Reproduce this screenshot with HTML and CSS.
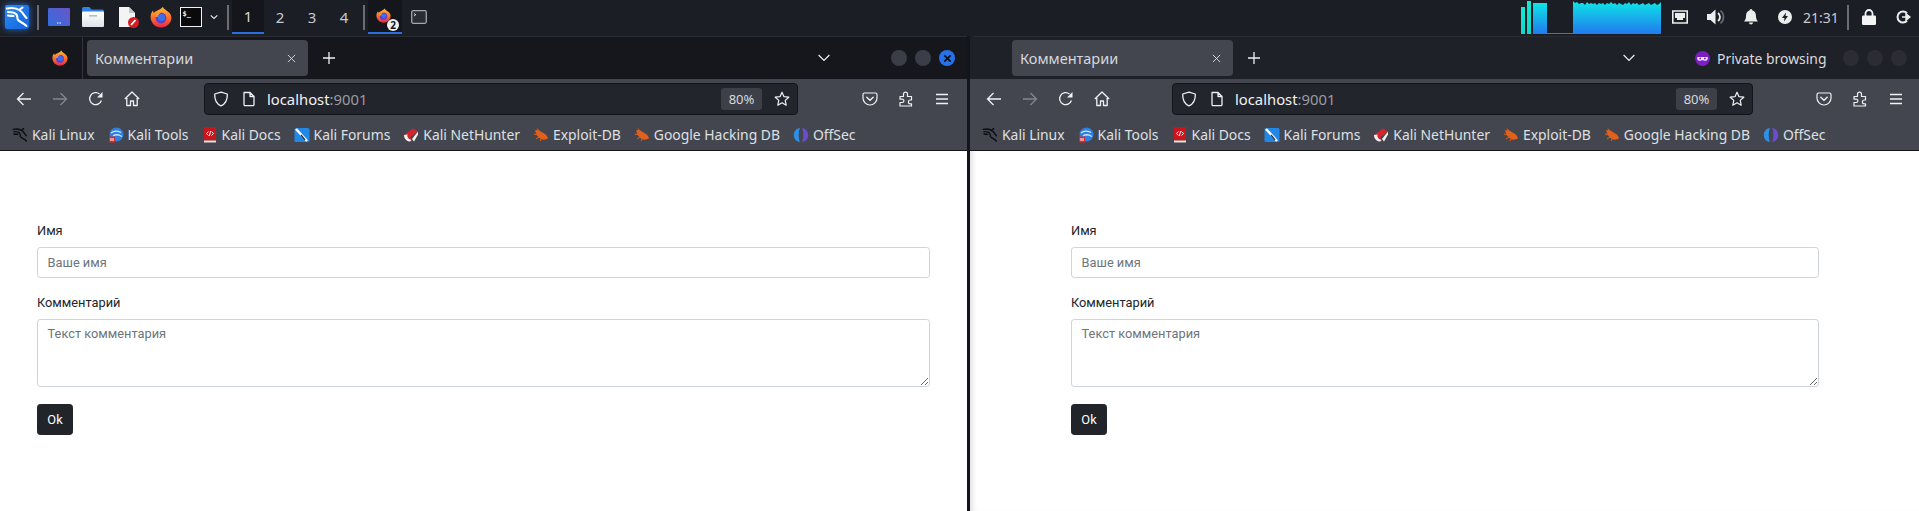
FILE: index.html
```html
<!DOCTYPE html>
<html lang="ru">
<head>
    <meta charset="UTF-8">
    <meta name="viewport" content="width=device-width, initial-scale=1.0">
    <title>Комментарии</title>
    <link rel="stylesheet" href="styles.css">
</head>
<body>

    <!-- Icon sprite -->
    <svg class="sprite" xmlns="http://www.w3.org/2000/svg">
        <defs>
            <linearGradient id="gradBar" x1="0" y1="0" x2="0" y2="1">
                <stop offset="0" stop-color="#0ee6e6"/>
                <stop offset="1" stop-color="#2179ee"/>
            </linearGradient>
            <linearGradient id="gradTeal" x1="0" y1="0" x2="0" y2="1">
                <stop offset="0" stop-color="#14e8d0"/>
                <stop offset="1" stop-color="#10d8c8"/>
            </linearGradient>
            <linearGradient id="gradFlame" x1="0" y1="0" x2="0" y2="1">
                <stop offset="0" stop-color="#ffc02e"/>
                <stop offset="0.55" stop-color="#ff6a2b"/>
                <stop offset="1" stop-color="#e5284a"/>
            </linearGradient>
            <linearGradient id="gradWs" x1="0" y1="1" x2="1" y2="0">
                <stop offset="0" stop-color="#2f6fe0"/>
                <stop offset="1" stop-color="#6a55c8"/>
            </linearGradient>
            <linearGradient id="gradFolder" x1="0" y1="0" x2="0" y2="1">
                <stop offset="0" stop-color="#ffffff"/>
                <stop offset="1" stop-color="#dfe3e8"/>
            </linearGradient>

            <symbol id="i-firefox" viewBox="0 0 22 22">
                <path d="M13 .8c.2 1.800 1.800 2.600 3.400 3.600 3 1.900 4.900 4 5 7.100.2 5.600-4.600 10-10.400 10C5.200 21.500.6 16.800.6 11 .6 8.600 1.500 6.200 3 4.600c0 1 .3 1.800.9 2.300C6 4.500 10.500 4 13 .8z" fill="url(#gradFlame)"/>
                <circle cx="11" cy="12" r="5.400" fill="#5a3fd0"/>
                <circle cx="11.500" cy="11.500" r="3.600" fill="#3f6fe8"/>
                <path d="M5 11c1-3 4-5 7.500-4.600C10 7 8 8.500 7.500 11z" fill="#ff9a2e"/>
            </symbol>

            <symbol id="i-kali" viewBox="0 0 24 24">
                <path d="M2 3.500c5-1 9.500-.5 13 2 3 2 4 5 6.500 7.500M3 7c3.500 0 7 .5 8.500 2.500 1.500 1.900.2 3.600 1.500 5.400 1.500 2 5 2.600 8.500 6.100M14 5l3.500-2.500M3 10.500c2 .5 4 .3 5.500.5" fill="none" stroke="currentColor" stroke-width="2.100" stroke-linecap="round"/>
            </symbol>

            <symbol id="i-arrow" viewBox="0 0 16 16">
                <path d="M15 8H1.500M7.500 2L1.500 8l6 6" fill="none" stroke="currentColor" stroke-width="1.300"/>
            </symbol>
            <symbol id="i-reload" viewBox="0 0 16 16">
                <path d="M13.400 9.500A6 6 0 1 1 11.500 3" fill="none" stroke="currentColor" stroke-width="1.300"/>
                <path d="M14.500 1v5.500H9z" fill="currentColor"/>
            </symbol>
            <symbol id="i-home" viewBox="0 0 16 16">
                <path d="M.8 8L8 1l7.200 7M2.800 7v7.500h3.700v-4.500h3v4.500h3.700V7" fill="none" stroke="currentColor" stroke-width="1.300" stroke-linejoin="round"/>
            </symbol>
            <symbol id="i-shield" viewBox="0 0 16 16">
                <path d="M8 1.200l6.300 1.800c.2 5.500-1.500 9.800-6.300 11.800C3.200 12.800 1.500 8.500 1.700 3z" fill="none" stroke="currentColor" stroke-width="1.300" stroke-linejoin="round"/>
            </symbol>
            <symbol id="i-page" viewBox="0 0 16 16">
                <path d="M3 1.500h6l4 4v8a1.200 1.200 0 0 1-1.200 1.200H4.200A1.200 1.200 0 0 1 3 13.500z M9 1.500v4h4" fill="none" stroke="currentColor" stroke-width="1.300" stroke-linejoin="round"/>
            </symbol>
            <symbol id="i-star" viewBox="0 0 16 16">
                <path d="M8 1.200l2 4.500 4.800.5-3.600 3.200 1 4.800L8 11.800l-4.200 2.400 1-4.800L1.200 6.200 6 5.700z" fill="none" stroke="currentColor" stroke-width="1.200" stroke-linejoin="round"/>
            </symbol>
            <symbol id="i-pocket" viewBox="0 0 16 16">
                <path d="M2.500 2h11A1.500 1.500 0 0 1 15 3.500V7a7 7 0 0 1-14 0V3.500A1.500 1.500 0 0 1 2.500 2z" fill="none" stroke="currentColor" stroke-width="1.200"/>
                <path d="M4.800 6.200L8 9.200l3.200-3" fill="none" stroke="currentColor" stroke-width="1.400" stroke-linecap="round"/>
            </symbol>
            <symbol id="i-ext" viewBox="0 0 16 16">
                <path d="M2 5.500h3.500V3.200a2 2 0 0 1 4 0V5.500H13.500v3.500h-1.200v0a1.900 1.900 0 0 0 0 3.800h1.200V15H2v-3.500h2.200a1.700 1.700 0 0 0 0-3.400H2z" fill="none" stroke="currentColor" stroke-width="1.200" stroke-linejoin="round"/>
            </symbol>
            <symbol id="i-menu" viewBox="0 0 16 16">
                <path d="M2 3.500h12M2 8h12M2 12.500h12" stroke="currentColor" stroke-width="1.300"/>
            </symbol>
            <symbol id="i-close" viewBox="0 0 10 10">
                <path d="M1 1l8 8M9 1l-8 8" stroke="currentColor" stroke-width="1"/>
            </symbol>
            <symbol id="i-plus" viewBox="0 0 12 12">
                <path d="M6 0v12M0 6h12" stroke="currentColor" stroke-width="1.300"/>
            </symbol>
            <symbol id="i-chevron" viewBox="0 0 12 8">
                <path d="M.6 1l5.400 5.500L11.400 1" fill="none" stroke="currentColor" stroke-width="1.200"/>
            </symbol>

            <!-- Bookmark favicons -->
            <symbol id="b-tools" viewBox="0 0 16 16">
                <circle cx="8.500" cy="7.500" r="7" fill="#2f7fe0"/>
                <path d="M3 6c3-2.500 6-2.500 10-.5M5 9c3-2 5-1.500 9 .5" fill="none" stroke="#cfe6ff" stroke-width="1.300"/>
                <rect x="1" y="9.500" width="6" height="6" rx="1" fill="#d8282c"/>
                <path d="M3 11v3M5 11v3" stroke="#fff" stroke-width="1"/>
            </symbol>
            <symbol id="b-docs" viewBox="0 0 16 16">
                <rect x="2" y="0" width="12" height="13.500" fill="#c8161c"/>
                <rect x="2" y="13.500" width="12" height="2" fill="#e8dfd8"/>
                <path d="M6.500 4.500L4.500 6.500l2 2M9.500 4.500l2 2-2 2M8.700 4l-1.400 5" fill="none" stroke="#fff" stroke-width=".9"/>
            </symbol>
            <symbol id="b-forums" viewBox="0 0 16 16">
                <rect x="0.500" y="1" width="15" height="14" rx="1.500" fill="#2188e8"/>
                <path d="M2 2l11 12" stroke="#fff" stroke-width="2.400"/>
                <path d="M7 8l4 5" stroke="#33363d" stroke-width="1.400"/>
            </symbol>
            <symbol id="b-nethunter" viewBox="0 0 16 16">
                <path d="M1 8l9-6.500 5 3-8 6 2 3-2 1.500z" fill="#d4242c"/>
                <path d="M1 8c0 4 3 6.500 6 6.500l1.500-1.500C5 12 4 10 4.500 7.500z" fill="#f0f0f0"/>
                <path d="M15 4.500L9 12l2 2.500 4-7z" fill="#f0f0f0"/>
            </symbol>
            <symbol id="b-bug" viewBox="0 0 16 16">
                <path d="M2 3.500c2-1 4-.5 6 1l4 2.500c1.500 1 2.500 2.500 3 4.500-2.500 1.500-5.500 1.500-7.500.2C5 10.500 3 7 2 3.500z" fill="#e0601c"/>
                <path d="M4 1.500l2.500 3M1 7l3.500 1M3 12l3-2M7 14l1.500-2.500" stroke="#e0601c" stroke-width="1"/>
            </symbol>
            <symbol id="b-offsec" viewBox="0 0 16 16">
                <path d="M6.800 1C3 1.500 .8 4.500.8 8s2.200 6.500 6 7c-1.500-4-1.500-10 0-14z" fill="#2f8fe6"/>
                <path d="M9.200 1c3.800.5 6 3.500 6 7s-2.200 6.500-6 7c1.500-4 1.500-10 0-14z" fill="#6b4bd0"/>
            </symbol>
        </defs>
    </svg>

    <!-- Top panel -->
    <div class="panel">
        <div class="panel-group">
            <span class="kali-button"><svg class="kali-mark"><use href="#i-kali"/></svg></span>
            <span class="panel-sep sep-first"></span>
            <svg class="launcher launcher-ws" viewBox="0 0 22 18">
                <rect width="22" height="18" rx="1" fill="url(#gradWs)"/>
                <path d="M9 15h4" stroke="#fff" stroke-width="1" stroke-dasharray="1 .5"/>
            </svg>
            <svg class="launcher launcher-folder" viewBox="0 0 22 20">
                <path d="M0 1.500A1.500 1.500 0 0 1 1.500 0h6l2 2.500h11A1.500 1.500 0 0 1 22 4v3H0z" fill="#2f80e0"/>
                <rect y="4.500" width="22" height="15.500" rx="1" fill="url(#gradFolder)"/>
                <rect x="7" y="8" width="8" height="1.600" fill="#b8bcc4"/>
            </svg>
            <svg class="launcher launcher-doc" viewBox="0 0 21 21">
                <path d="M1 0h10l6 6v14H1z" fill="#f4f4f4"/>
                <path d="M11 0l6 6h-6z" fill="#c4c6cb"/>
                <circle cx="15.500" cy="15.500" r="5.500" fill="#d01f26"/>
                <path d="M13 18l4.500-5" stroke="#fff" stroke-width="1.800"/>
            </svg>
            <svg class="launcher launcher-fox"><use href="#i-firefox"/></svg>
            <svg class="launcher launcher-term" viewBox="0 0 22 20">
                <rect x=".5" y=".5" width="21" height="19" fill="#0a0a0c" stroke="#f2f2f2"/>
                <text x="2.500" y="9" class="term-text">$_</text>
            </svg>
            <svg class="panel-chevron" viewBox="0 0 12 8"><path d="M1 1.500l5 4.500 5-4.500" fill="none" stroke="#e8e8ea" stroke-width="1.800"/></svg>
            <span class="panel-sep sep-pager"></span>
            <div class="pager">
                <span class="pager-item pager-active">1</span>
                <span class="pager-item">2</span>
                <span class="pager-item">3</span>
                <span class="pager-item">4</span>
            </div>
            <span class="panel-sep sep-tasks"></span>
            <div class="task task-active">
                <svg class="task-fox"><use href="#i-firefox"/></svg>
                <span class="task-badge">2</span>
            </div>
            <svg class="task-term" viewBox="0 0 16 14">
                <rect x=".7" y=".7" width="14.600" height="12.600" rx="1.500" fill="#2b2d34" stroke="#a4a6ac" stroke-width="1.300"/>
                <path d="M3 3.500l1.800 1.200L3 6" fill="none" stroke="#e8e8e8" stroke-width=".9"/>
            </svg>
        </div>
        <div class="panel-group panel-right">
            <svg class="graph" viewBox="0 0 140 34" preserveAspectRatio="none">
                <rect x="0" y="7" width="4" height="27" fill="url(#gradTeal)"/>
                <rect x="6" y="1" width="4" height="33" fill="url(#gradTeal)"/>
                <rect x="12" y="3" width="14" height="31" fill="url(#gradBar)"/>
                <rect x="26" y="33" width="26" height="1" fill="#2179ee"/>
                <path d="M52 34V1L54 3 56 2 58 4 60 3 62 3 64 5 66 2 68 4 70 3 72 4 74 3 76 5 78 3 80 4 82 3 84 5 86 3 88 4 90 2 92 4 94 3 96 5 98 3 100 4 102 5 104 3 106 4 108 2 110 5 112 3 114 4 116 3 118 5 120 4 122 3 124 5 126 4 128 3 130 5 132 4 134 3 136 5 138 4 140 2V34z" fill="url(#gradBar)"/>
            </svg>
            <svg class="tray tray-net" viewBox="0 0 16 14">
                <path d="M.8 1h14.400v12H.8z" fill="none" stroke="#eceded" stroke-width="1.600"/>
                <path d="M3 3h10v5h-2v2H5V8H3z" fill="#eceded"/>
            </svg>
            <svg class="tray tray-vol" viewBox="0 0 18 16">
                <path d="M0 5h3.500L8.500.5v15L3.500 11H0z" fill="#eceded"/>
                <path d="M11 4a5 5 0 0 1 0 8" fill="none" stroke="#eceded" stroke-width="1.800"/>
                <path d="M13.500 1.500a8.500 8.500 0 0 1 0 13" fill="none" stroke="#6a6c72" stroke-width="1.600"/>
            </svg>
            <svg class="tray tray-bell" viewBox="0 0 14 16">
                <path d="M7 0a1.500 1.500 0 0 1 1.500 1.500C11 2.200 12 4.500 12 7c0 3 .8 4 2 5.500H0C1.200 11 2 10 2 7c0-2.500 1-4.800 3.500-5.500A1.500 1.500 0 0 1 7 0zM5 13.500h4a2 2 0 0 1-4 0z" fill="#eceded"/>
            </svg>
            <svg class="tray tray-power" viewBox="0 0 14 14">
                <circle cx="7" cy="7" r="7" fill="#eceded"/>
                <path d="M8 2.500L4 8h2.500L6 11.500 10 6H7.500z" fill="#1c1e26"/>
            </svg>
            <span class="clock">21:31</span>
            <span class="panel-sep sep-clock"></span>
            <svg class="tray tray-lock" viewBox="0 0 14 16">
                <path d="M3.500 7V4.500a3.500 3.500 0 0 1 7 0V7" fill="none" stroke="#f4f4f4" stroke-width="1.800"/>
                <rect y="6.500" width="14" height="9.500" rx="1.200" fill="#f4f4f4"/>
            </svg>
            <svg class="tray tray-logout" viewBox="0 0 15 14">
                <path d="M11 3.200A5.500 5.500 0 1 0 11 10.800" fill="none" stroke="#eceded" stroke-width="2"/>
                <path d="M6 7h5M10 3.800L14 7l-4 3.200z" fill="#eceded" stroke="#eceded" stroke-width="1.400"/>
            </svg>
        </div>
    </div>

    <div class="desktop">

        <!-- Left window -->
        <div class="window window-normal">
            <div class="tabbar">
                <svg class="tabbar-fox"><use href="#i-firefox"/></svg>
                <span class="tabbar-line"></span>
                <div class="tab">
                    <span class="tab-title">Комментарии</span>
                    <svg class="tab-close"><use href="#i-close"/></svg>
                </div>
                <svg class="tab-plus"><use href="#i-plus"/></svg>
                <svg class="tab-list"><use href="#i-chevron"/></svg>
                <div class="winbtns">
                    <span class="winbtn"></span>
                    <span class="winbtn"></span>
                    <span class="winbtn winbtn-close"><svg viewBox="0 0 10 10"><path d="M1.500 1.500l7 7M8.500 1.500l-7 7" stroke="#10121a" stroke-width="2"/></svg></span>
                </div>
            </div>
            <div class="toolbar">
                <span class="tool"><svg><use href="#i-arrow"/></svg></span>
                <span class="tool tool-off"><svg class="flip"><use href="#i-arrow"/></svg></span>
                <span class="tool"><svg><use href="#i-reload"/></svg></span>
                <span class="tool"><svg><use href="#i-home"/></svg></span>
                <div class="urlbar">
                    <svg class="url-icon url-shield"><use href="#i-shield"/></svg>
                    <svg class="url-icon url-page"><use href="#i-page"/></svg>
                    <span class="url-text">localhost<span class="url-port">:9001</span></span>
                    <span class="zoom-badge">80%</span>
                    <svg class="url-icon url-star"><use href="#i-star"/></svg>
                </div>
                <div class="tool-end">
                    <span class="tool"><svg><use href="#i-pocket"/></svg></span>
                    <span class="tool"><svg><use href="#i-ext"/></svg></span>
                    <span class="tool"><svg><use href="#i-menu"/></svg></span>
                </div>
            </div>
            <div class="bookmarks">
                <span class="bm"><svg class="bm-kali"><use href="#i-kali"/></svg>Kali Linux</span>
                <span class="bm"><svg><use href="#b-tools"/></svg>Kali Tools</span>
                <span class="bm"><svg><use href="#b-docs"/></svg>Kali Docs</span>
                <span class="bm"><svg><use href="#b-forums"/></svg>Kali Forums</span>
                <span class="bm"><svg><use href="#b-nethunter"/></svg>Kali NetHunter</span>
                <span class="bm"><svg><use href="#b-bug"/></svg>Exploit-DB</span>
                <span class="bm"><svg><use href="#b-bug"/></svg>Google Hacking DB</span>
                <span class="bm"><svg><use href="#b-offsec"/></svg>OffSec</span>
            </div>
            <div class="page">
                <form class="comment-form">
                    <label class="form-label">Имя</label>
                    <input class="form-control" type="text" placeholder="Ваше имя">
                    <label class="form-label">Комментарий</label>
                    <textarea class="form-control form-area" placeholder="Текст комментария"></textarea>
                    <button class="btn-ok" type="button">Ok</button>
                </form>
            </div>
        </div>

        <span class="window-gap"></span>

        <!-- Right window, private -->
        <div class="window window-private">
            <div class="tabbar">
                <div class="tab">
                    <span class="tab-title">Комментарии</span>
                    <svg class="tab-close"><use href="#i-close"/></svg>
                </div>
                <svg class="tab-plus"><use href="#i-plus"/></svg>
                <svg class="tab-list"><use href="#i-chevron"/></svg>
                <span class="private-label">
                    <svg viewBox="0 0 16 16">
                        <circle cx="8" cy="8" r="8" fill="#7b1fc4"/>
                        <path d="M2.500 6.500h11c.5 2.500-.5 4-2.500 4-1.500 0-2-1-3-1s-1.500 1-3 1c-2 0-3-1.500-2.500-4z" fill="#f0e6ff"/>
                        <circle cx="5.500" cy="8" r="1" fill="#7b1fc4"/>
                        <circle cx="10.500" cy="8" r="1" fill="#7b1fc4"/>
                    </svg>
                    Private browsing
                </span>
                <div class="winbtns">
                    <span class="winbtn"></span>
                    <span class="winbtn"></span>
                    <span class="winbtn"></span>
                </div>
            </div>
            <div class="toolbar">
                <span class="tool"><svg><use href="#i-arrow"/></svg></span>
                <span class="tool tool-off"><svg class="flip"><use href="#i-arrow"/></svg></span>
                <span class="tool"><svg><use href="#i-reload"/></svg></span>
                <span class="tool"><svg><use href="#i-home"/></svg></span>
                <div class="urlbar">
                    <svg class="url-icon url-shield"><use href="#i-shield"/></svg>
                    <svg class="url-icon url-page"><use href="#i-page"/></svg>
                    <span class="url-text">localhost<span class="url-port">:9001</span></span>
                    <span class="zoom-badge">80%</span>
                    <svg class="url-icon url-star"><use href="#i-star"/></svg>
                </div>
                <div class="tool-end">
                    <span class="tool"><svg><use href="#i-pocket"/></svg></span>
                    <span class="tool"><svg><use href="#i-ext"/></svg></span>
                    <span class="tool"><svg><use href="#i-menu"/></svg></span>
                </div>
            </div>
            <div class="bookmarks">
                <span class="bm"><svg class="bm-kali"><use href="#i-kali"/></svg>Kali Linux</span>
                <span class="bm"><svg><use href="#b-tools"/></svg>Kali Tools</span>
                <span class="bm"><svg><use href="#b-docs"/></svg>Kali Docs</span>
                <span class="bm"><svg><use href="#b-forums"/></svg>Kali Forums</span>
                <span class="bm"><svg><use href="#b-nethunter"/></svg>Kali NetHunter</span>
                <span class="bm"><svg><use href="#b-bug"/></svg>Exploit-DB</span>
                <span class="bm"><svg><use href="#b-bug"/></svg>Google Hacking DB</span>
                <span class="bm"><svg><use href="#b-offsec"/></svg>OffSec</span>
            </div>
            <div class="page">
                <form class="comment-form">
                    <label class="form-label">Имя</label>
                    <input class="form-control" type="text" placeholder="Ваше имя">
                    <label class="form-label">Комментарий</label>
                    <textarea class="form-control form-area" placeholder="Текст комментария"></textarea>
                    <button class="btn-ok" type="button">Ok</button>
                </form>
            </div>
        </div>

    </div>

</body>
</html>
```

FILE: styles.css
```css
* {
    box-sizing: border-box;
}

html, body {
    margin: 0;
    height: 100%;
}

body {
    display: flex;
    flex-direction: column;
    width: 1919px;
    height: 511px;
    overflow: hidden;
    background: #1c1e26;
    font-family: "Noto Sans", "Open Sans", sans-serif;
}

.sprite {
    display: block;
    width: 0;
    height: 0;
    overflow: hidden;
}

/* Top panel */
.panel {
    display: flex;
    justify-content: space-between;
    height: 36px;
    flex: none;
    background: #1c1e26;
}

.panel-group {
    display: flex;
    align-items: center;
    height: 34px;
}

.kali-button {
    display: flex;
    width: 24px;
    height: 24px;
    margin-left: 5px;
    background: linear-gradient(135deg, #2b8df5, #1462d8);
    color: #fff;
    box-shadow: 0 0 7px rgba(40, 130, 245, 0.8);
    border-radius: 2px;
}

.kali-mark {
    width: 24px;
    height: 24px;
}

.panel-sep {
    width: 2px;
    height: 25px;
    background: #6b6d73;
}

.sep-first {
    margin-left: 8px;
}

.launcher {
    flex: none;
}

.launcher-ws {
    width: 22px;
    height: 18px;
    margin-left: 9px;
}

.launcher-folder {
    width: 22px;
    height: 20px;
    margin-left: 12px;
}

.launcher-doc {
    width: 21px;
    height: 21px;
    margin-left: 14px;
}

.launcher-fox {
    width: 22px;
    height: 22px;
    margin-left: 11px;
}

.launcher-term {
    width: 22px;
    height: 20px;
    margin-left: 8px;
}

.term-text {
    font-family: "DejaVu Sans Mono", monospace;
    font-size: 7px;
    font-weight: bold;
    fill: #f2f2f2;
}

.panel-chevron {
    width: 8px;
    height: 6px;
    margin-left: 8px;
}

.sep-pager {
    margin-left: 9px;
}

.pager {
    display: flex;
    height: 34px;
    margin-left: 3px;
}

.pager-item {
    display: flex;
    align-items: center;
    justify-content: center;
    width: 32px;
    color: #c8cad0;
    font-size: 15px;
}

.pager-active {
    background: #15161b;
    border-bottom: 2px solid #2a6fdb;
    color: #d8dade;
}

.sep-tasks {
    margin-left: 3px;
}

.task {
    position: relative;
    display: flex;
    align-items: center;
    justify-content: center;
    width: 34px;
    height: 34px;
    margin-left: 3px;
}

.task-active {
    background: #15161b;
    border-bottom: 2px solid #2a6fdb;
}

.task-fox {
    width: 15px;
    height: 15px;
    margin: 0 3px 2px 0;
}

.task-badge {
    position: absolute;
    left: 19px;
    top: 19px;
    width: 12px;
    height: 12px;
    border-radius: 50%;
    background: #f0f0f0;
    color: #15161b;
    font-size: 10px;
    font-weight: bold;
    line-height: 12px;
    text-align: center;
}

.task-term {
    width: 16px;
    height: 14px;
    margin-left: 9px;
}

.graph {
    width: 140px;
    height: 34px;
    margin-right: 11px;
}

.tray {
    flex: none;
}

.tray-net {
    width: 16px;
    height: 14px;
}

.tray-vol {
    width: 18px;
    height: 16px;
    margin-left: 19px;
}

.tray-bell {
    width: 14px;
    height: 16px;
    margin-left: 19px;
}

.tray-power {
    width: 14px;
    height: 14px;
    margin-left: 20px;
}

.clock {
    margin-left: 11px;
    width: 32px;
    color: #c8cad0;
    font-size: 14px;
}

.sep-clock {
    margin-left: 12px;
}

.tray-lock {
    width: 14px;
    height: 16px;
    margin-left: 13px;
}

.tray-logout {
    width: 15px;
    height: 14px;
    margin: 0 8px 0 20px;
}

/* Windows */
.desktop {
    display: flex;
    flex: 1;
    min-height: 0;
}

.window {
    display: flex;
    flex-direction: column;
    min-width: 0;
}

.window-normal {
    width: 967px;
}

.window-gap {
    width: 3px;
    background: #14151a;
}

.window-private {
    flex: 1;
    border-radius: 5px 0 0 0;
    overflow: hidden;
}

.tabbar {
    display: flex;
    align-items: center;
    height: 43px;
    flex: none;
    color: #f0f0f2;
    border-top: 1px solid #2a2c33;
}

.window-normal .tabbar {
    background: #16171c;
}

.window-private .tabbar {
    background: #1f2129;
}

.tabbar-fox {
    width: 16px;
    height: 16px;
    margin-left: 52px;
}

.tabbar-line {
    width: 1px;
    height: 43px;
    margin-left: 14px;
    background: #34363c;
}

.tab {
    display: flex;
    align-items: center;
    justify-content: space-between;
    width: 221px;
    height: 36px;
    margin-left: 4px;
    padding: 0 12px 0 8px;
    background: #43464f;
    border-radius: 4px;
}

.window-private .tab {
    margin-left: 42px;
}

.tab-title {
    color: #d6d8dc;
    font-size: 14.5px;
}

.tab-close {
    width: 9px;
    height: 9px;
    color: #e0e1e4;
}

.tab-plus {
    width: 12px;
    height: 12px;
    margin-left: 15px;
}

.tab-list {
    width: 12px;
    height: 8px;
    margin-left: 483px;
}

.window-private .tab-list {
    margin-left: 363px;
}

.winbtns {
    display: flex;
    gap: 8px;
    margin-left: auto;
    margin-right: 12px;
}

.window-private .winbtns {
    margin-right: 12px;
}

.winbtn {
    display: flex;
    align-items: center;
    justify-content: center;
    width: 16px;
    height: 16px;
    border-radius: 50%;
    background: #3b3e48;
}

.window-private .winbtn {
    background: #2b2d33;
}

.winbtn svg {
    width: 9px;
    height: 9px;
}

.winbtn-close {
    background: #2672ec;
}

.private-label {
    display: flex;
    align-items: center;
    gap: 7px;
    margin-left: 60px;
    color: #dadbde;
    font-size: 13.900px;
}

.private-label svg {
    width: 15px;
    height: 15px;
}

.toolbar {
    display: flex;
    align-items: center;
    height: 36px;
    flex: none;
    padding: 0 7px 0 6px;
    background: #43464f;
    color: #f1f1f3;
}

.tool {
    display: flex;
    align-items: center;
    justify-content: center;
    width: 36px;
    height: 32px;
    margin-top: 4px;
}

.tool svg {
    width: 16px;
    height: 16px;
}

.tool-off {
    color: #84868c;
}

.flip {
    transform: scaleX(-1);
}

.tool-end {
    display: flex;
    margin-left: auto;
}

.urlbar {
    display: flex;
    align-items: center;
    height: 32px;
    width: 594px;
    margin: 4px 0 0 54px;
    padding: 0 7px 0 8px;
    background: #23252d;
    border: 1px solid #14151a;
    border-radius: 4px;
}

.window-private .urlbar {
    width: 581px;
    margin-left: 52px;
}

.window-private .toolbar {
    padding-right: 5px;
}

.url-icon {
    width: 16px;
    height: 16px;
    flex: none;
}

.url-page {
    margin-left: 12px;
}

.url-text {
    margin-left: 10px;
    color: #f1f1f3;
    font-size: 14.800px;
}

.url-port {
    color: #9a9ca3;
}

.zoom-badge {
    display: flex;
    align-items: center;
    justify-content: center;
    width: 41px;
    height: 22px;
    margin-left: auto;
    background: #3d4049;
    border-radius: 3px;
    color: #d8dade;
    font-size: 13px;
}

.url-star {
    margin-left: 12px;
}

.bookmarks {
    display: flex;
    align-items: center;
    gap: 13px;
    height: 36px;
    flex: none;
    padding: 4px 0 0 12px;
    background: #43464f;
    border-bottom: 1px solid #14151a;
    color: #dfe0e3;
    font-size: 13.900px;
}

.bm {
    display: flex;
    align-items: center;
    gap: 4px;
    white-space: nowrap;
}

.bm svg {
    width: 16px;
    height: 16px;
    flex: none;
}

.bm-kali {
    color: #0c0c10;
}

/* Page */
.page {
    flex: 1;
    background: #fff;
}

.window-private .page {
    box-shadow: inset 6px 0 6px -5px rgba(0, 0, 0, 0.18);
}

.comment-form {
    display: flex;
    flex-direction: column;
    align-items: flex-start;
    padding-top: 70px;
    font-family: Roboto, "Noto Sans", sans-serif;
}

.window-normal .comment-form {
    margin: 0 37px;
}

.window-private .comment-form {
    margin: 0 100px 0 101px;
}

.form-label {
    margin-bottom: 6.400px;
    color: #212529;
    font-size: 12.800px;
    line-height: 19.200px;
}

.form-control {
    display: block;
    width: 100%;
    height: 31px;
    margin-bottom: 15.400px;
    padding: 4.800px 9.600px;
    background: #fff;
    border: 1px solid #ced4da;
    border-radius: 3.200px;
    color: #212529;
    font-family: inherit;
    font-size: 12.800px;
    line-height: 19.200px;
}

.form-control::placeholder {
    color: #6c757d;
    opacity: 1;
}

.form-area {
    height: 68px;
    margin-bottom: 17px;
}

.btn-ok {
    width: 36px;
    height: 31px;
    padding: 0;
    background: #212529;
    border: 1px solid #212529;
    border-radius: 3.200px;
    color: #fff;
    font-family: inherit;
    font-size: 12.800px;
}
```
